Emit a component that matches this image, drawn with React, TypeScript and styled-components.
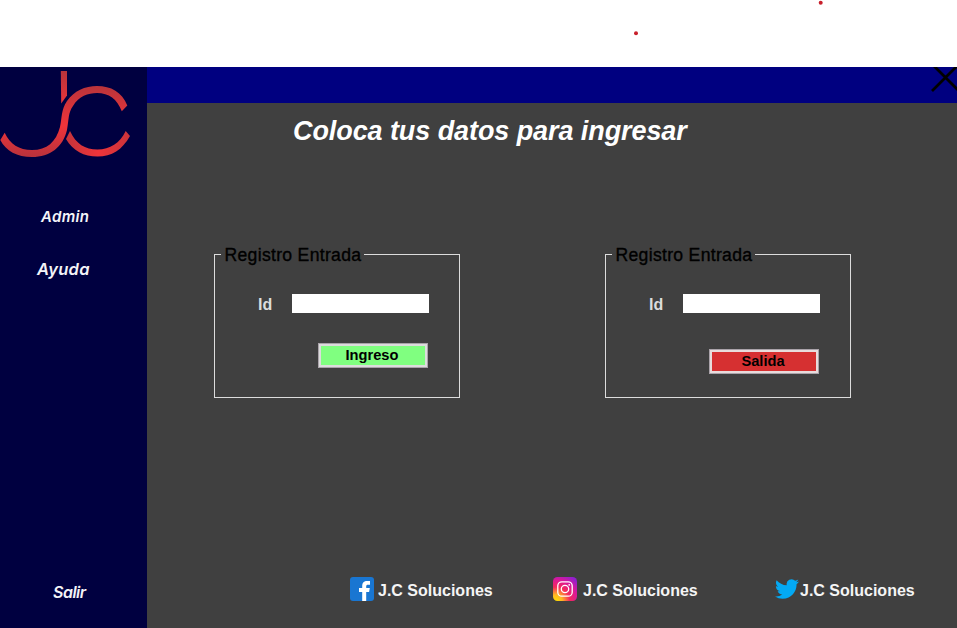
import React from "react";
import styled, { createGlobalStyle } from "styled-components";

const GlobalStyle = createGlobalStyle`
  * { box-sizing: border-box; }
  body { margin: 0; background: #fff; overflow: hidden; font-family: "Liberation Sans", Arial, sans-serif; }
`;

const Page = styled.div`
  width: 957px;
  height: 628px;
  display: grid;
  grid-template-rows: 67px 561px;
`;

const Strip = styled.header`
  background: #fff;
`;

const StripMarks = styled.svg`
  display: block;
`;

const Window = styled.div`
  display: grid;
  grid-template-columns: 147px 810px;
`;

const Sidebar = styled.nav`
  background: #000040;
  display: flex;
  flex-direction: column;
  align-items: flex-start;
  height: 561px;
`;

const Logo = styled.svg`
  display: block;
  flex: none;
  margin-bottom: 39px;
`;

const NavItem = styled.a<{ $left: number; $size: number; $gap?: number; $spacing?: number; $last?: boolean }>`
  margin: ${(p) => (p.$last ? "auto" : "0")} 0 ${(p) => p.$gap ?? 0}px ${(p) => p.$left}px;
  font: italic 600 ${(p) => p.$size}px/22px Inter, sans-serif;
  font-feature-settings: "cv11";
  letter-spacing: ${(p) => p.$spacing ?? 0}px;
  color: #f4f4f8;
`;

const Main = styled.main`
  background: #404040;
  display: flex;
  flex-direction: column;
`;

const TitleBar = styled.div`
  height: 36px;
  background: #000080;
  display: flex;
  justify-content: flex-end;
`;

const CloseButton = styled.button`
  width: 28px;
  height: 28px;
  padding: 0;
  border: 0;
  background: transparent;
`;

const Heading = styled.h1`
  margin: 11px 0 0 146px;
  font-size: 27px;
  line-height: 34px;
  font-style: italic;
  font-weight: 700;
  letter-spacing: -0.08px;
  white-space: nowrap;
  color: #fff;
`;

const Forms = styled.div`
  display: flex;
  gap: 145px;
  margin: 95px 0 0 67px;
`;

const Group = styled.fieldset`
  width: 246px;
  height: 155px;
  margin: 0;
  padding: 0;
  border: 1px solid #dcdcdc;
  min-width: 0;
`;

const Legend = styled.legend`
  margin-left: 6px;
  padding: 2px 0 0 3.5px;
  width: 143px;
  font-size: 17.6px;
  line-height: 20px;
  letter-spacing: 0.3px;
  white-space: nowrap;
  color: #000;
  -webkit-text-stroke: 0.35px #000;
`;

const Field = styled.label`
  display: flex;
  align-items: center;
  margin: 28px 0 0 43px;
  height: 20px;
  font-size: 16px;
  font-weight: 700;
  color: #dcdcdc;
`;

const FieldName = styled.span`
  width: 34px;
  padding-top: 4px;
  line-height: 20px;
`;

const Input = styled.input`
  width: 137px;
  height: 19px;
  padding: 0 3px;
  border: 0;
  background: #fff;
`;

const Submit = styled.button<{ $fill: string; $edge: string; $top: number }>`
  display: block;
  width: 110px;
  height: 25px;
  margin: ${(p) => p.$top}px 0 0 103px;
  padding: 0 2px 2px 0;
  border: 1px solid #aaa3aa;
  background: ${(p) => p.$fill};
  box-shadow: inset 0 0 0 2px ${(p) => p.$edge};
  font: 700 14.67px/20px "Liberation Sans", Arial, sans-serif;
  color: #000;
`;

const Footer = styled.footer`
  display: flex;
  align-items: center;
  margin: auto 0 26px 203px;
  height: 26px;
`;

const Social = styled.a<{ $width: number; $gap: number }>`
  display: flex;
  align-items: center;
  gap: ${(p) => p.$gap}px;
  width: ${(p) => p.$width}px;
  font-size: 16px;
  font-weight: 700;
  line-height: 20px;
  white-space: nowrap;
  color: #f5f5f5;
`;

const SocialIcon = styled.svg`
  display: block;
  flex: none;
`;

const SocialName = styled.span`
  padding-top: 4px;
`;

function JcLogo() {
  return (
    <Logo width="147" height="100" viewBox="0 67 147 100">
      <defs>
        <linearGradient id="upper" gradientUnits="userSpaceOnUse" x1="0" y1="87" x2="0" y2="157">
          <stop offset="0" stopColor="#ba343b" />
          <stop offset=".55" stopColor="#f0343a" />
          <stop offset="1" stopColor="#b8323c" />
        </linearGradient>
        <linearGradient id="stem" gradientUnits="userSpaceOnUse" x1="0" y1="71" x2="0" y2="103">
          <stop offset="0" stopColor="#b9343b" />
          <stop offset="1" stopColor="#e8343a" />
        </linearGradient>
        <linearGradient id="lower" gradientUnits="userSpaceOnUse" x1="67" y1="0" x2="130" y2="0">
          <stop offset="0" stopColor="#c5343b" />
          <stop offset=".5" stopColor="#ee343a" />
          <stop offset="1" stopColor="#c9343b" />
        </linearGradient>
      </defs>
      <path d="M60.8 71H67V95.5L61.2 103.5Z" fill="url(#stem)" />
      <path
        d="M.3 140C6 151 17 157 32 157C50 157 63 147 67 130C69 119 68 113 73 106C79 96 88 93 97 93C109 93 117 99 121.8 111.2L127.3 105.5C122 92 111 86 97 86C85 86 74 91 67 101C61 110 62 118 60 127C56 142 47 150 32 150C19 150 10 144 4.7 132.7Z"
        fill="url(#upper)"
      />
      <path
        d="M66 139C73 151 84 156.5 97.5 156.5C112 156.5 122 150 130 136L125.7 131C120 143 110 149.5 97.5 149.5C85 149.5 76 144 70 131Z"
        fill="url(#lower)"
      />
    </Logo>
  );
}

function FacebookIcon() {
  return (
    <SocialIcon width="24" height="24" viewBox="0 0 24 24">
      <rect width="24" height="24" rx="3" fill="#1976d2" />
      <path d="M12.2 24V15H9V11H12.2V9.3C12.2 5.4 14 4 17.1 4H20V7.8H18.1C16.6 7.8 16.2 8.3 16.2 9.7V11H19.8L19.1 15H16.2V24Z" fill="#fff" />
    </SocialIcon>
  );
}

function InstagramIcon() {
  return (
    <SocialIcon width="24" height="24" viewBox="0 0 24 24" fill="none">
      <defs>
        <radialGradient id="warm" cx=".12" cy="1" r="1.2">
          <stop offset="0" stopColor="#ffe000" />
          <stop offset=".22" stopColor="#ffb524" />
          <stop offset=".48" stopColor="#f42a5c" />
          <stop offset=".75" stopColor="#d9189a" />
          <stop offset="1" stopColor="#8f20d0" />
        </radialGradient>
      </defs>
      <rect width="24" height="24" rx="4.5" fill="url(#warm)" />
      <rect x="4.8" y="4.8" width="14.4" height="14.4" rx="4" stroke="#fff" strokeWidth="1.3" />
      <circle cx="12" cy="12" r="3.7" stroke="#fff" strokeWidth="1.3" />
      <circle cx="16.2" cy="7.8" r=".9" fill="#fff" />
    </SocialIcon>
  );
}

function TwitterIcon() {
  return (
    <SocialIcon width="24" height="24" viewBox="0 0 24 24">
      <path
        d="M23.954 4.569a10 10 0 0 1-2.825.775 4.958 4.958 0 0 0 2.163-2.723c-.951.555-2.005.959-3.127 1.184a4.92 4.92 0 0 0-8.384 4.482C7.691 8.094 4.066 6.13 1.64 3.161a4.822 4.822 0 0 0-.666 2.475c0 1.71.87 3.213 2.188 4.096a4.904 4.904 0 0 1-2.228-.616v.061a4.923 4.923 0 0 0 3.946 4.827 4.996 4.996 0 0 1-2.212.085 4.937 4.937 0 0 0 4.604 3.417 9.868 9.868 0 0 1-6.102 2.105c-.39 0-.779-.023-1.17-.067a13.995 13.995 0 0 0 7.557 2.209c9.054 0 13.999-7.496 13.999-13.986 0-.209 0-.42-.015-.63a9.936 9.936 0 0 0 2.46-2.548Z"
        fill="#03a9f4"
      />
    </SocialIcon>
  );
}

interface EntryProps {
  action: string;
  fill: string;
  edge: string;
  top: number;
}

function EntryForm({ action, fill, edge, top }: EntryProps) {
  return (
    <Group>
      <Legend>Registro Entrada</Legend>
      <Field>
        <FieldName>Id</FieldName>
        <Input />
      </Field>
      <Submit type="button" $fill={fill} $edge={edge} $top={top}>{action}</Submit>
    </Group>
  );
}

export default function App() {
  return (
    <Page>
      <GlobalStyle />
      <Strip>
        <StripMarks width="957" height="67" viewBox="0 0 957 67" fill="#c8202c">
          <circle cx="820.7" cy="2.7" r="2" />
          <circle cx="636" cy="33.2" r="2" />
        </StripMarks>
      </Strip>
      <Window>
        <Sidebar>
          <JcLogo />
          <NavItem $left={41} $size={15} $gap={30} $spacing={0.3}>Admin</NavItem>
          <NavItem $left={37} $size={16.5} $spacing={0.3}>Ayuda</NavItem>
          <NavItem $left={53} $size={16} $spacing={-0.5} $gap={25} $last>Salir</NavItem>
        </Sidebar>
        <Main>
          <TitleBar>
            <CloseButton type="button" aria-label="Cerrar">
              <svg width="28" height="28" viewBox="0 0 28 28" stroke="#000" strokeWidth="2.8">
                <path d="M4 -2L32 26M3 24L31 -4" />
              </svg>
            </CloseButton>
          </TitleBar>
          <Heading>Coloca tus datos para ingresar</Heading>
          <Forms>
            <EntryForm action="Ingreso" fill="#80ff80" edge="#dcdcdc" top={30} />
            <EntryForm action="Salida" fill="#d63031" edge="#e8dcdc" top={36} />
          </Forms>
          <Footer>
            <Social $width={203} $gap={4}><FacebookIcon /><SocialName>J.C Soluciones</SocialName></Social>
            <Social $width={222} $gap={6}><InstagramIcon /><SocialName>J.C Soluciones</SocialName></Social>
            <Social $width={145} $gap={1}><TwitterIcon /><SocialName>J.C Soluciones</SocialName></Social>
          </Footer>
        </Main>
      </Window>
    </Page>
  );
}
